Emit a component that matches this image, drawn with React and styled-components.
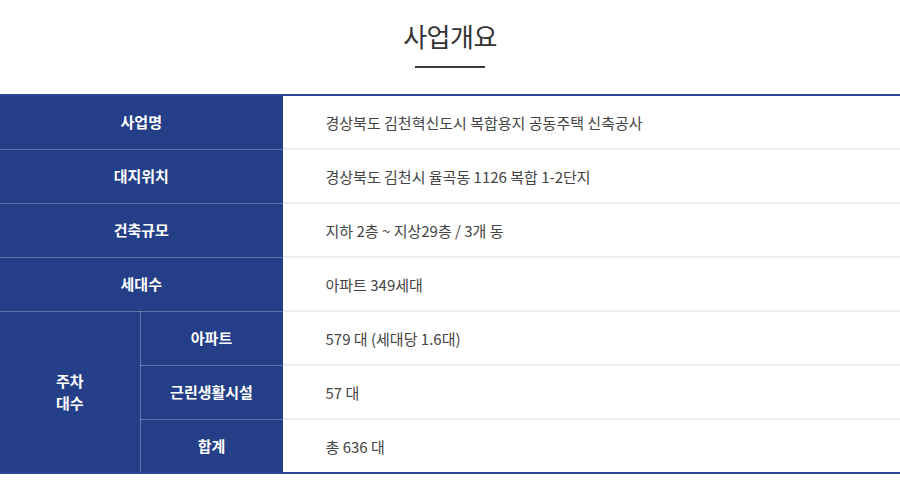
import styled, { createGlobalStyle } from "styled-components";

const GlobalStyle = createGlobalStyle`
  body {
    margin: 0;
    background: #fff;
    font-family: "Noto Sans CJK KR", "Noto Sans", sans-serif;
  }
`;

const Section = styled.section`
  width: 900px;
  padding-top: 17px;
`;

const Title = styled.h2`
  margin: 0;
  font-size: 26px;
  line-height: 38px;
  font-weight: 400;
  color: #333;
  text-align: center;
  letter-spacing: -0.5px;
`;

const TitleBar = styled.div`
  width: 70px;
  height: 2px;
  margin: 11px auto 26px;
  background: #3a3a3a;
`;

const Table = styled.table`
  width: 100%;
  border-collapse: collapse;
  table-layout: fixed;
  border-top: 2px solid #2d4890;
  border-bottom: 2px solid #2d4890;
`;

const Head = styled.th`
  height: 52px;
  padding: 0;
  background: #243f88;
  color: #fff;
  font-size: 15px;
  font-weight: 700;
  line-height: 22px;
  text-align: center;
  border-bottom: 1px solid rgba(255, 255, 255, 0.28);
  border-right: 1px solid rgba(255, 255, 255, 0.28);
  tr:last-child & {
    border-bottom: none;
  }
`;

const Cell = styled.td`
  height: 52px;
  padding: 0 0 0 42px;
  font-size: 15px;
  color: #444;
  border-bottom: 2px solid #ececec;
  tr:last-child & {
    border-bottom: none;
  }
`;

const rows = [
  ["사업명", "경상북도 김천혁신도시 복합용지 공동주택 신축공사"],
  ["대지위치", "경상북도 김천시 율곡동 1126 복합 1-2단지"],
  ["건축규모", "지하 2층 ~ 지상29층 / 3개 동"],
  ["세대수", "아파트 349세대"],
];

const parking = [
  ["아파트", "579 대 (세대당 1.6대)"],
  ["근린생활시설", "57 대"],
  ["합계", "총 636 대"],
];

export default function App() {
  return (
    <>
      <GlobalStyle />
      <Section>
        <Title>사업개요</Title>
        <TitleBar />
        <Table>
          <colgroup>
            <col style={{ width: 140 }} />
            <col style={{ width: 143 }} />
            <col />
          </colgroup>
          <tbody>
            {rows.map(([label, value]) => (
              <tr key={label}>
                <Head colSpan={2}>{label}</Head>
                <Cell>{value}</Cell>
              </tr>
            ))}
            {parking.map(([label, value], i) => (
              <tr key={label}>
                {i === 0 && (
                  <Head rowSpan={3}>
                    주차
                    <br />
                    대수
                  </Head>
                )}
                <Head>{label}</Head>
                <Cell>{value}</Cell>
              </tr>
            ))}
          </tbody>
        </Table>
      </Section>
    </>
  );
}
